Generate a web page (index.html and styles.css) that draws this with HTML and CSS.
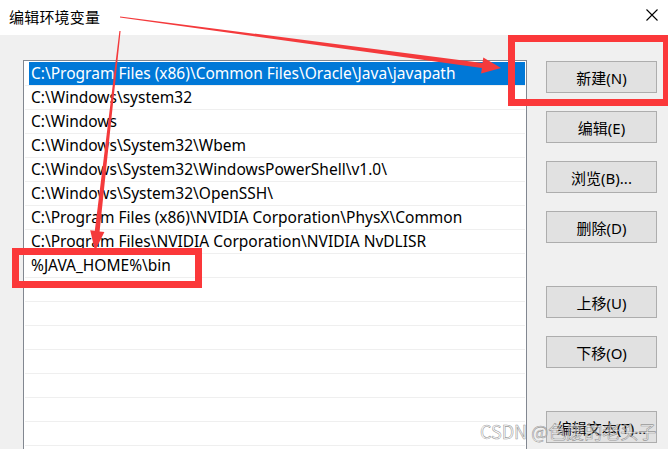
FILE: index.html
```html
<!DOCTYPE html>
<html lang="zh">
<head>
<meta charset="utf-8">
<link rel="stylesheet" href="styles.css">
</head>
<body>
<div class="window">
  <div class="titlebar">
    <span class="title">编辑环境变量</span>
    <svg class="close" width="12" height="12" viewBox="0 0 12 12"><path d="M0.5 0.5 L11.5 11.5 M11.5 0.5 L0.5 11.5" stroke="#000" stroke-width="1.1" fill="none"/></svg>
  </div>
  <div class="body">
    <div class="list">
      <div class="row"><span class="cell sel">C:\Program Files (x86)\Common Files\Oracle\Java\javapath</span></div>
      <div class="row"><span class="cell">C:\Windows\system32</span></div>
      <div class="row"><span class="cell">C:\Windows</span></div>
      <div class="row"><span class="cell">C:\Windows\System32\Wbem</span></div>
      <div class="row"><span class="cell">C:\Windows\System32\WindowsPowerShell\v1.0\</span></div>
      <div class="row"><span class="cell">C:\Windows\System32\OpenSSH\</span></div>
      <div class="row"><span class="cell">C:\Program Files (x86)\NVIDIA Corporation\PhysX\Common</span></div>
      <div class="row"><span class="cell">C:\Program Files\NVIDIA Corporation\NVIDIA NvDLISR</span></div>
      <div class="row"><span class="cell">%JAVA_HOME%\bin</span></div>
      <div class="row"><span class="cell"></span></div>
      <div class="row"><span class="cell"></span></div>
      <div class="row"><span class="cell"></span></div>
      <div class="row"><span class="cell"></span></div>
      <div class="row"><span class="cell"></span></div>
      <div class="row"><span class="cell"></span></div>
      <div class="row"><span class="cell"></span></div>
      <div class="row"><span class="cell"></span></div>
    </div>
    <div class="buttons">
      <button class="btn">新建(N)</button>
      <button class="btn">编辑(E)</button>
      <button class="btn">浏览(B)...</button>
      <button class="btn">删除(D)</button>
      <button class="btn gap">上移(U)</button>
      <button class="btn">下移(O)</button>
      <button class="btn gap">编辑文本(T)...</button>
    </div>
  </div>
  <div class="redbox box-new"></div>
  <div class="redbox box-java"></div>
  <svg class="arrows" width="668" height="449" viewBox="0 0 668 449">
    <polygon fill="#f43a3c" points="120.1,16.4 482.5,63.0 483.3,57.6 501,68 481.1,73.4 481.9,68.0 119.9,17.6"/>
    <polygon fill="#f43a3c" points="120.6,31.1 99.6,231.4 104.4,231.9 95,251 90.2,230.3 94.8,230.8 119.4,30.9"/>
  </svg>
  <div class="watermark">CSDN @色废的老头子</div>
</div>
</body>
</html>
```
FILE: styles.css
```css
html, body {
  margin: 0;
  padding: 0;
}
body {
  font-family: "Noto Sans", "Noto Sans CJK SC", sans-serif;
  font-size: 15px;
  color: #000;
  background: #f0f0f0;
}
.window {
  position: relative;
  width: 668px;
  height: 449px;
  overflow: hidden;
  background: #f0f0f0;
}
.titlebar {
  height: 35px;
  background: #fff;
  display: flex;
  align-items: center;
  justify-content: space-between;
  padding: 0 10px 2px 9px;
  box-sizing: border-box;
}
.title {
  font-family: "Noto Sans CJK SC", sans-serif;
  font-size: 15px;
  letter-spacing: 0.2px;
}
.close {
  display: block;
  margin-bottom: 3px;
}
.body {
  display: flex;
  align-items: flex-start;
  padding: 25px 0 0 23px;
  height: 414px;
  box-sizing: border-box;
}
.list {
  width: 504px;
  height: 420px;
  box-sizing: border-box;
  border: 1px solid #828790;
  border-bottom: none;
  background: #fff;
  padding: 1px 1px 0 1px;
  flex: none;
  font-size: 15.5px;
}
.row {
  height: 24px;
  box-sizing: border-box;
  border-bottom: 1px solid #efefef;
}
.cell {
  display: block;
  height: 23px;
  line-height: 23px;
  margin-left: 4px;
  padding-left: 2px;
  white-space: nowrap;
  overflow: hidden;
}
.cell.sel {
  background: #0078d7;
  color: #fff;
}
.buttons {
  display: flex;
  flex-direction: column;
  gap: 18px;
  margin-left: 19px;
  padding-top: 1px;
  flex: none;
}
.btn {
  width: 111px;
  height: 32px;
  background: #e1e1e1;
  border: 1px solid #adadad;
  border-radius: 0;
  font-family: "Noto Sans", "Noto Sans CJK SC", sans-serif;
  font-size: 15px;
  color: #000;
  padding: 0;
  margin: 0;
}
.btn.gap {
  margin-top: 25px;
}
.redbox {
  position: absolute;
  border: 7px solid #fb383a;
  box-sizing: border-box;
}
.box-new {
  left: 508px;
  top: 35px;
  width: 162px;
  height: 71px;
}
.box-java {
  left: 12px;
  top: 248px;
  width: 190px;
  height: 40px;
}
.arrows {
  position: absolute;
  left: 0;
  top: 0;
  pointer-events: none;
}
.watermark {
  position: absolute;
  left: 480px;
  top: 418px;
  font-family: "Noto Sans CJK SC", sans-serif;
  font-size: 18px;
  color: rgba(255, 255, 255, 0.6);
  -webkit-text-stroke: 0.6px rgba(120, 120, 120, 0.75);
  white-space: nowrap;
}
```
